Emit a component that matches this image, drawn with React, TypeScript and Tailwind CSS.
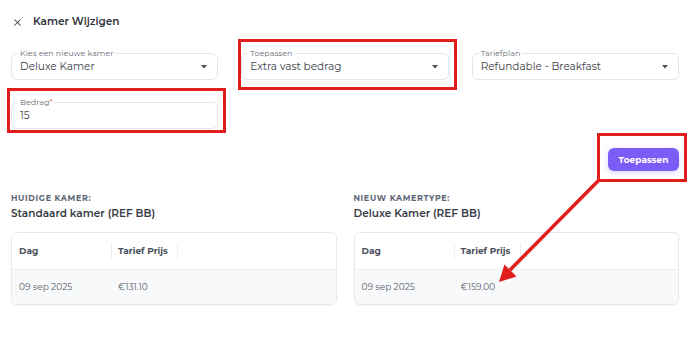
import React from 'react';
import { X } from 'lucide-react';

const font = { fontFamily: 'Montserrat, Inter, "Noto Sans", sans-serif' };

type FieldProps = { label: string; value: string; required?: boolean; select?: boolean };

const Field: React.FC<FieldProps> = ({ label, value, required, select }) => (
  <div className="relative h-[27px] rounded-md border border-[#e3e5e8] bg-white flex items-center pl-[8px] pr-[10px]">
    <span className="absolute -top-[6px] left-[6px] bg-white px-[2px] text-[8px] leading-[10px] text-[#6b6f78]">
      {label}
      {required && <span className="text-[#e53935]">*</span>}
    </span>
    <span className="flex-1 text-[10.5px] text-[#3a3d45] pt-[1px]">{value}</span>
    {select && (
      <svg width="6" height="4" viewBox="0 0 6 4" className="mt-[1px]">
        <path d="M0 0h6L3 3.5z" fill="#4a4d55" />
      </svg>
    )}
  </div>
);

type TableProps = { heading: string; room: string; date: string; price: string };

const RoomTable: React.FC<TableProps> = ({ heading, room, date, price }) => (
  <div>
    <div className="text-[8px] font-bold tracking-[0.08em] text-[#5d6474] leading-[10px]">{heading}</div>
    <div className="mt-[4px] text-[10.5px] font-semibold text-[#363b47] leading-[14px]">{room}</div>
    <div className="mt-[11px] rounded-md border border-[#e6e8eb] overflow-hidden shadow-[0_1px_2px_rgba(0,0,0,0.04)]">
      <div className="flex items-center h-[36px] text-[9px] font-bold text-[#4b505c] bg-white">
        <div className="w-[100px] pl-[7px] border-r border-[#eceef1] h-[16px] flex items-center">Dag</div>
        <div className="w-[66px] pl-[6px] border-r border-[#eceef1] h-[16px] flex items-center">Tarief Prijs</div>
      </div>
      <div className="flex items-center h-[35px] text-[9px] text-[#595e69] bg-[#f8f9fb] border-t border-[#eceef1]">
        <div className="w-[100px] pl-[7px]">{date}</div>
        <div className="pl-[6px]">{price}</div>
      </div>
    </div>
  </div>
);

export default function App() {
  return (
    <div className="relative w-[688px] h-[346px] bg-white overflow-hidden" style={font}>
      <div className="pl-[11px] pr-[9px] pt-[14px]">
        {/* Title */}
        <div className="flex items-center h-[16px]">
          <X size={11} strokeWidth={2.2} className="text-[#3a3d45] ml-[1px]" />
          <span className="ml-[10px] text-[10.5px] font-semibold text-[#2f333b]">Kamer Wijzigen</span>
        </div>

        {/* Fields */}
        <div className="mt-[23px] grid grid-cols-3 gap-x-[23px] gap-y-[22px]">
          <Field label="Kies een nieuwe kamer" value="Deluxe Kamer" select />
          <Field label="Toepassen" value="Extra vast bedrag" select />
          <Field label="Tariefplan" value="Refundable - Breakfast" select />
          <Field label="Bedrag" value="15" required />
        </div>

        <div className="mt-[19px] flex justify-end">
          <button className="h-[23px] w-[71px] rounded-md bg-[#7b5cf6] text-white text-[9px] font-bold shadow-[0_2px_6px_rgba(123,92,246,0.25)]">
            Toepassen
          </button>
        </div>

        <div className="mt-[22px] grid grid-cols-2 gap-x-[17px]">
          <RoomTable heading="HUIDIGE KAMER:" room="Standaard kamer (REF BB)" date="09 sep 2025" price="€131.10" />
          <RoomTable heading="NIEUW KAMERTYPE:" room="Deluxe Kamer (REF BB)" date="09 sep 2025" price="€159.00" />
        </div>
      </div>

      {/* Annotation overlays */}
      <div className="absolute left-[238px] top-[39px] w-[219px] h-[51px] border-[3px] border-[#e11d1d]" />
      <div className="absolute left-[7px] top-[88px] w-[219px] h-[45px] border-[3px] border-[#e11d1d]" />
      <div className="absolute left-[597px] top-[133px] w-[90px] h-[49px] border-[3px] border-[#e11d1d]" />
      <svg className="absolute left-0 top-0" width="688" height="346">
        <line x1="598" y1="181" x2="510" y2="270" stroke="#e11d1d" strokeWidth="3.5" />
        <polygon points="499,282 516.5,276.5 504.5,264.5" fill="#e11d1d" />
      </svg>
    </div>
  );
}
